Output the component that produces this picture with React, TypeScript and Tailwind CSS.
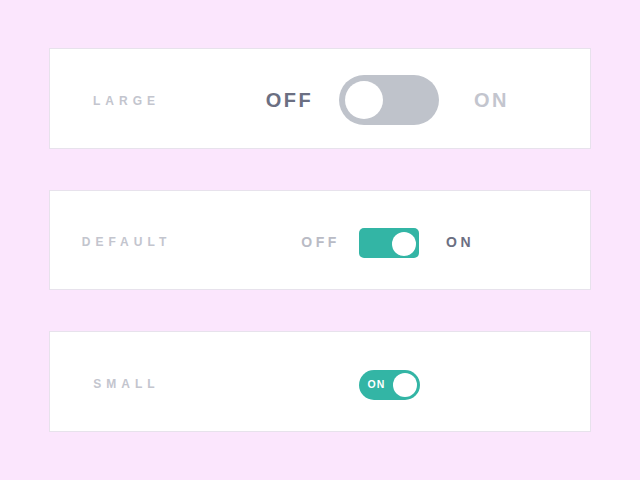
const font = { fontFamily: '"Liberation Sans", Arial, sans-serif' }

function Label({ text }: { text: string }) {
    return (
        <div className="w-[150px] mt-[5px] text-center text-[12px] font-bold tracking-[5px] pl-[3px] text-[#c3c5ce]">
            {text}
        </div>
    )
}

function Card({ children }: { children: React.ReactNode }) {
    return (
        <div className="h-[100.5px] bg-white border border-[#e7e2ec] flex items-center">
            {children}
        </div>
    )
}

export default function App() {
    return (
        <div className="w-[640px] h-[480px] bg-[#fbe6fd] px-[49px] pt-[48px] flex flex-col gap-[41px]" style={font}>
            <Card>
                <Label text="LARGE" />
                <div className="flex-1 flex items-center justify-center pr-[12px]">
                    <div className="w-[60px] mt-[4px] text-center text-[20px] font-bold tracking-[2.5px] pl-[3px] text-[#6b6f82]">OFF</div>
                    <div className="mx-[21px] mt-[4px] w-[100px] h-[50px] rounded-full bg-[#bfc3cb] flex items-center px-[6px]">
                        <div className="w-[38px] h-[38px] rounded-full bg-white" />
                    </div>
                    <div className="w-[60px] mt-[4px] text-center text-[20px] font-bold tracking-[2.5px] pl-[3px] text-[#c3c5ce]">ON</div>
                </div>
            </Card>
            <Card>
                <Label text="DEFAULT" />
                <div className="flex-1 flex items-center justify-center pr-[12px]">
                    <div className="w-[50px] mt-[6px] text-center text-[14px] font-bold tracking-[3.5px] pl-[3px] text-[#b9bbc5]">OFF</div>
                    <div className="mx-[15px] mt-[6px] w-[60px] h-[30px] rounded-[5px] bg-[#33b5a5] flex items-center justify-end px-[3px]">
                        <div className="w-[24px] h-[24px] rounded-full bg-white mt-[2px]" />
                    </div>
                    <div className="w-[50px] mt-[6px] text-center text-[14px] font-bold tracking-[3.5px] pl-[2px] text-[#6b6f82]">ON</div>
                </div>
            </Card>
            <Card>
                <Label text="SMALL" />
                <div className="flex-1 flex items-center justify-center pr-[12px]">
                    <div className="mt-[8px] w-[61px] h-[30px] rounded-full bg-[#33b5a5] flex items-center justify-between pl-[9px] pr-[3px]">
                        <span className="text-[10.5px] font-bold tracking-[1px] text-white">ON</span>
                        <div className="w-[24px] h-[24px] rounded-full bg-white" />
                    </div>
                </div>
            </Card>
        </div>
    )
}
